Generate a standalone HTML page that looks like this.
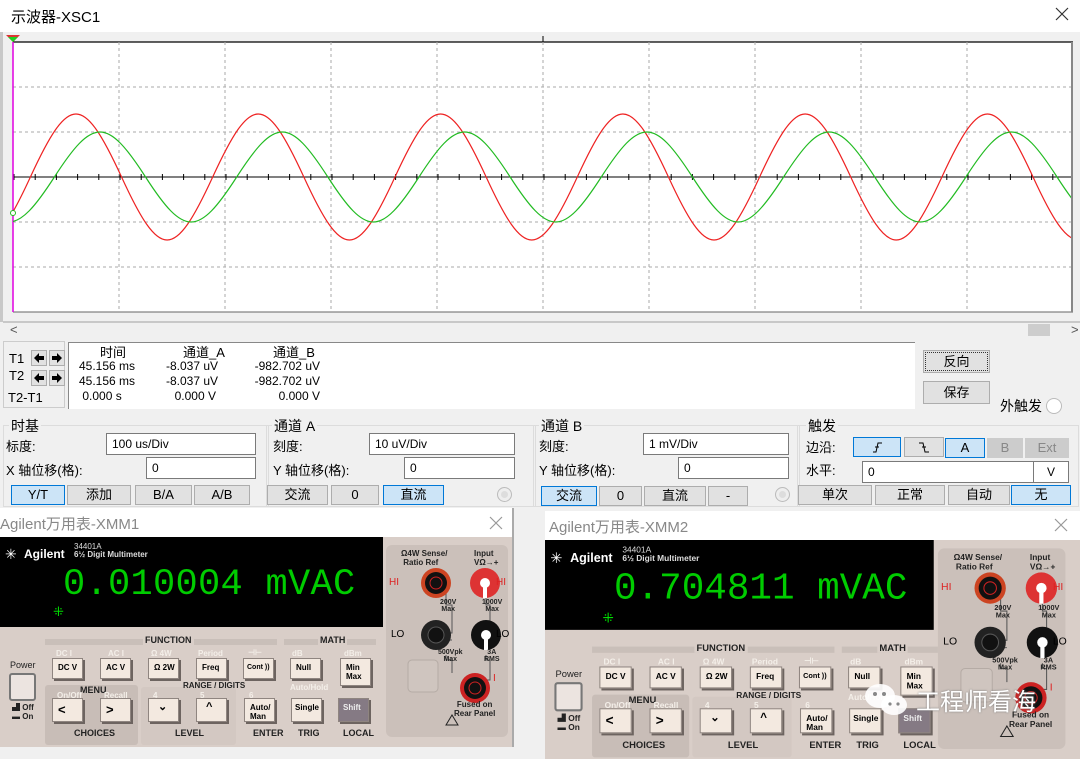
<!DOCTYPE html>
<html><head><meta charset="utf-8"><style>
*{box-sizing:border-box;margin:0;padding:0}
body{width:1080px;height:747px;overflow:hidden;background:#f0f0f0;font-family:"Liberation Sans","Noto Sans CJK SC",sans-serif;position:relative;font-size:13px;color:#000}
.a{position:absolute;white-space:nowrap}
.btn{position:absolute;background:#e1e1e1;border:1px solid #adadad;text-align:center;font-size:13px;line-height:18px;overflow:hidden}
.sel{background:#cce4f7;border-color:#0078d7}
.inp{position:absolute;background:#fff;border:1px solid #7a7a7a;font-size:12px;line-height:20px;padding-left:5px;height:22px}
.grp{position:absolute;border:1px solid #dcdcdc}
.m{position:absolute;width:512px;height:210px;background:#d9cec8;overflow:hidden}
.m .a{font-family:"Liberation Sans",sans-serif}
.k{position:absolute;width:31px;height:21px;background:#f3e9e0;border:1px solid #8f8580;box-shadow:2px 2px 0 #6d6460;font-size:8px;font-weight:bold;line-height:9px;padding:4px 0 0 5px;white-space:nowrap;overflow:hidden}
.lb{position:absolute;font-size:8px;color:#f4efe9;font-weight:bold;white-space:nowrap}
.dk{position:absolute;font-size:9px;font-weight:bold;color:#222;white-space:nowrap}
.ar{position:absolute;width:16px;height:16px;background:#e1e1e1;border:1px solid #adadad}
</style></head><body>

<div class="a" style="left:0;top:0;width:1080px;height:32px;background:#fff"></div>
<div class="a" style="left:11px;top:6px;font-size:15px">示波器-XSC1</div>
<svg class="a" style="left:1055px;top:7px" width="14" height="14"><path d="M1 1L13 13M13 1L1 13" stroke="#333" stroke-width="1.2"/></svg>
<div class="a" style="left:0;top:32px;width:3px;height:290px;background:#c8c8c8"></div>

<svg class="a" style="left:0;top:32px" width="1080" height="290">
<rect x="3" y="0" width="1077" height="290" fill="#f0f0f0"/>
<rect x="13" y="10" width="1060" height="270" fill="#fff"/>
<line x1="13" y1="10" x2="1073" y2="10" stroke="#000" stroke-width="1.2"/>
<g stroke="#aaa" stroke-dasharray="3,3" stroke-width="1">
<line x1="119" y1="10" x2="119" y2="280"/><line x1="225" y1="10" x2="225" y2="280"/><line x1="331" y1="10" x2="331" y2="280"/><line x1="437" y1="10" x2="437" y2="280"/><line x1="543" y1="10" x2="543" y2="280"/><line x1="649" y1="10" x2="649" y2="280"/><line x1="755" y1="10" x2="755" y2="280"/><line x1="861" y1="10" x2="861" y2="280"/><line x1="967" y1="10" x2="967" y2="280"/>
<line x1="13" y1="55" x2="1073" y2="55"/><line x1="13" y1="100" x2="1073" y2="100"/><line x1="13" y1="190" x2="1073" y2="190"/><line x1="13" y1="235" x2="1073" y2="235"/>
</g>
<line x1="13" y1="280" x2="1073" y2="280" stroke="#666"/>
<line x1="13" y1="145" x2="1073" y2="145" stroke="#000"/>
<line x1="13.5" y1="145" x2="1073" y2="145" stroke="#000" stroke-width="6" stroke-dasharray="1,20.2"/>
<line x1="1072" y1="10" x2="1072" y2="280" stroke="#888" stroke-width="2"/>
<line x1="543" y1="4" x2="543" y2="10" stroke="#000"/>
<line x1="13" y1="10" x2="13" y2="280" stroke="#e000e0" stroke-width="1.5"/>
<path d="M6 3L20 3L13 10Z" fill="#d33"/><path d="M8 5L18 5L13 10Z" fill="#2c2"/>
<clipPath id="c"><rect x="13" y="42" width="1058" height="270"/></clipPath>
<g clip-path="url(#c)" fill="none" stroke-width="1.2" transform="translate(0,-32)">
<path stroke="#ee2222" d="M-60.75 177 C-22.1 261 -8.25 261 30.4 177 S82.9 93 121.55 177 S174.05 261 212.7 177 S265.2 93 303.85 177 S356.35 261 395 177 S447.5 93 486.15 177 S538.65 261 577.3 177 S629.8 93 668.45 177 S720.95 261 759.6 177 S812.1 93 850.75 177 S903.25 261 941.9 177 S994.4 93 1033.05 177 S1085.55 261 1124.2 177"/>
<path stroke="#22bb22" d="M-36.75 177 C1.9 237 15.75 237 54.4 177 S106.9 117 145.55 177 S198.05 237 236.7 177 S289.2 117 327.85 177 S380.35 237 419 177 S471.5 117 510.15 177 S562.65 237 601.3 177 S653.8 117 692.45 177 S744.95 237 783.6 177 S836.1 117 874.75 177 S927.25 237 965.9 177 S1018.4 117 1057.05 177 S1109.55 237 1148.2 177"/>
</g>
<circle cx="13" cy="181" r="2.5" fill="#fff" stroke="#22bb22"/>
</svg>

<div class="a" style="left:3px;top:321px;width:1077px;height:2px;background:#c8c8c8"></div>
<div class="a" style="left:10px;top:322px;font-size:13px;color:#555">&lt;</div>
<div class="a" style="left:1028px;top:324px;width:22px;height:12px;background:#cdcdcd"></div>
<div class="a" style="left:1071px;top:322px;font-size:13px;color:#555">&gt;</div>

<div class="a" style="left:3px;top:341px;width:62px;height:67px;border:1px solid #ccc"></div>
<div class="a" style="left:9px;top:351px">T1</div>
<div class="a" style="left:9px;top:368px">T2</div>
<div class="a" style="left:8px;top:390px">T2-T1</div>
<div class="ar" style="left:31px;top:350px"><svg width="14" height="14"><path d="M2 7L7 2V5H12V9H7V12Z" fill="#000"/></svg></div>
<div class="ar" style="left:49px;top:350px"><svg width="14" height="14"><path d="M12 7L7 2V5H2V9H7V12Z" fill="#000"/></svg></div>
<div class="ar" style="left:31px;top:370px"><svg width="14" height="14"><path d="M2 7L7 2V5H12V9H7V12Z" fill="#000"/></svg></div>
<div class="ar" style="left:49px;top:370px"><svg width="14" height="14"><path d="M12 7L7 2V5H2V9H7V12Z" fill="#000"/></svg></div>
<div class="a" style="left:68px;top:342px;width:847px;height:67px;background:#fff;border-top:1px solid #888;border-left:1px solid #888"></div>
<div class="a" style="left:100px;top:342px;font-size:13px">时间</div>
<div class="a" style="left:183px;top:342px;font-size:13px">通道_A</div>
<div class="a" style="left:273px;top:342px;font-size:13px">通道_B</div>
<div class="a" style="left:79px;top:359px;font-size:12px;line-height:15px">45.156 ms<br>45.156 ms<br>&nbsp;0.000 s</div>
<div class="a" style="left:166px;top:359px;font-size:12px;line-height:15px;text-align:right;width:50px">-8.037 uV<br>-8.037 uV<br>0.000 V</div>
<div class="a" style="left:246px;top:359px;font-size:12px;line-height:15px;text-align:right;width:74px">-982.702 uV<br>-982.702 uV<br>0.000 V</div>
<div class="btn" style="left:923px;top:350px;width:67px;height:23px;line-height:21px;outline:1px dotted #333;outline-offset:-3px">反向</div>
<div class="btn" style="left:923px;top:381px;width:67px;height:23px;line-height:21px">保存</div>
<div class="a" style="left:1000px;top:396px;font-size:14px">外触发</div>
<div class="a" style="left:1046px;top:398px;width:16px;height:16px;border-radius:50%;background:#fff;border:1px solid #bbb"></div>

<div class="grp" style="left:3px;top:425px;width:266px;height:82px"></div>
<div class="a" style="left:9px;top:416px;font-size:14px;background:#f0f0f0;padding:0 2px">时基</div>
<div class="a" style="left:6px;top:436px;font-size:13px">标度:</div>
<div class="inp" style="left:106px;top:433px;width:150px">100 us/Div</div>
<div class="a" style="left:6px;top:460px;font-size:13px">X 轴位移(格):</div>
<div class="inp" style="left:146px;top:457px;width:110px">0</div>
<div class="btn sel" style="left:11px;top:485px;width:54px;height:20px">Y/T</div>
<div class="btn" style="left:67px;top:485px;width:64px;height:20px">添加</div>
<div class="btn" style="left:135px;top:485px;width:57px;height:20px">B/A</div>
<div class="btn" style="left:194px;top:485px;width:56px;height:20px">A/B</div>

<div class="grp" style="left:266px;top:425px;width:270px;height:82px"></div>
<div class="a" style="left:272px;top:416px;font-size:14px;background:#f0f0f0;padding:0 2px">通道 A</div>
<div class="a" style="left:273px;top:436px;font-size:13px">刻度:</div>
<div class="inp" style="left:369px;top:433px;width:146px">10 uV/Div</div>
<div class="a" style="left:273px;top:460px;font-size:13px">Y 轴位移(格):</div>
<div class="inp" style="left:404px;top:457px;width:111px">0</div>
<div class="btn" style="left:267px;top:485px;width:61px;height:20px">交流</div>
<div class="btn" style="left:331px;top:485px;width:48px;height:20px">0</div>
<div class="btn sel" style="left:383px;top:485px;width:61px;height:20px">直流</div>
<div class="a" style="left:497px;top:487px;width:15px;height:15px;border-radius:50%;background:#ddd;border:1px solid #bbb;box-shadow:inset 0 0 0 3px #eee"></div>

<div class="grp" style="left:533px;top:425px;width:267px;height:82px"></div>
<div class="a" style="left:539px;top:416px;font-size:14px;background:#f0f0f0;padding:0 2px">通道 B</div>
<div class="a" style="left:539px;top:436px;font-size:13px">刻度:</div>
<div class="inp" style="left:643px;top:433px;width:146px">1 mV/Div</div>
<div class="a" style="left:539px;top:460px;font-size:13px">Y 轴位移(格):</div>
<div class="inp" style="left:678px;top:457px;width:111px">0</div>
<div class="btn sel" style="left:541px;top:486px;width:56px;height:20px">交流</div>
<div class="btn" style="left:599px;top:486px;width:43px;height:20px">0</div>
<div class="btn" style="left:644px;top:486px;width:62px;height:20px">直流</div>
<div class="btn" style="left:708px;top:486px;width:40px;height:20px">-</div>
<div class="a" style="left:775px;top:487px;width:15px;height:15px;border-radius:50%;background:#ddd;border:1px solid #bbb;box-shadow:inset 0 0 0 3px #eee"></div>

<div class="grp" style="left:797px;top:425px;width:282px;height:82px"></div>
<div class="a" style="left:806px;top:416px;font-size:14px;background:#f0f0f0;padding:0 2px">触发</div>
<div class="a" style="left:806px;top:437px;font-size:13px">边沿:</div>
<div class="a" style="left:806px;top:460px;font-size:13px">水平:</div>
<div class="btn sel" style="left:853px;top:437px;width:48px;height:20px"><svg width="14" height="14" style="margin-top:2px"><path d="M3 12H6L8 3H12M5 7H9" stroke="#000" fill="none"/></svg></div>
<div class="btn" style="left:904px;top:437px;width:40px;height:20px"><svg width="14" height="14" style="margin-top:2px"><path d="M2 3H6L8 12H12M5 7H9" stroke="#000" fill="none"/></svg></div>
<div class="btn sel" style="left:945px;top:438px;width:40px;height:20px">A</div>
<div class="btn" style="left:987px;top:438px;width:36px;height:20px;background:#ccc;border-color:#ccc;color:#888">B</div>
<div class="btn" style="left:1025px;top:438px;width:44px;height:20px;background:#ccc;border-color:#ccc;color:#888">Ext</div>
<div class="inp" style="left:862px;top:461px;width:172px">0</div>
<div class="inp" style="left:1033px;top:461px;width:36px;text-align:center;padding:0">V</div>
<div class="btn" style="left:798px;top:485px;width:74px;height:20px">单次</div>
<div class="btn" style="left:875px;top:485px;width:70px;height:20px">正常</div>
<div class="btn" style="left:948px;top:485px;width:62px;height:20px">自动</div>
<div class="btn sel" style="left:1011px;top:485px;width:60px;height:20px">无</div>

<!-- XMM1 -->
<div class="a" style="left:0;top:508px;width:514px;height:239px;background:#fff;border-right:2px solid #aaa"></div>
<div class="a" style="left:0;top:513px;font-size:15px;color:#888">Agilent万用表-XMM1</div>
<svg class="a" style="left:489px;top:516px" width="14" height="14"><path d="M1 1L13 13M13 1L1 13" stroke="#999" stroke-width="1.2"/></svg>
<div class="m" style="left:0;top:537px">
<div class="a" style="left:0;top:0;width:383px;height:90px;background:#000"></div>
<div class="a" style="left:5px;top:9px;color:#fff;font-size:14px;line-height:16px">✳</div>
<div class="a" style="left:24px;top:10px;color:#fff;font-size:12px;font-weight:bold">Agilent</div>
<div class="a" style="left:74px;top:6px;color:#ddd;font-size:8px;line-height:8px">34401A<br><b>6½ Digit Multimeter</b></div>
<div class="a" style="left:63px;top:28px;color:#0c0;font-family:'Liberation Mono',monospace;font-size:37px;line-height:40px;letter-spacing:0.3px">0.010004 mVAC</div>
<div class="a" style="left:53px;top:67px;color:#0d0;font-size:13px">⁜</div>
<div class="a" style="left:45px;top:102px;width:232px;height:6px;background:#c9bfb9"></div>
<div class="dk" style="left:143px;top:98px;background:#d9cec8;padding:0 2px">FUNCTION</div>
<div class="a" style="left:284px;top:102px;width:92px;height:6px;background:#c9bfb9"></div>
<div class="dk" style="left:318px;top:98px;background:#d9cec8;padding:0 2px">MATH</div>
<div class="lb" style="left:56px;top:112px">DC I</div><div class="lb" style="left:108px;top:112px">AC I</div><div class="lb" style="left:151px;top:112px">Ω 4W</div><div class="lb" style="left:198px;top:112px">Period</div><div class="lb" style="left:248px;top:111px">⊣⊢</div><div class="lb" style="left:292px;top:112px">dB</div><div class="lb" style="left:344px;top:112px">dBm</div>
<div class="dk" style="left:10px;top:123px;font-weight:normal">Power</div>
<div class="a" style="left:9px;top:136px;width:27px;height:28px;background:#ece4e0;border:2px solid #777;border-radius:3px"></div>
<div class="dk" style="left:12px;top:166px;font-size:8px;line-height:9px">▟ Off<br>▬ On</div>
<div class="k" style="left:52px;top:121px">DC V</div>
<div class="k" style="left:100px;top:121px">AC V</div>
<div class="k" style="left:148px;top:121px">Ω 2W</div>
<div class="k" style="left:196px;top:121px">Freq</div>
<div class="k" style="left:243px;top:121px;padding-left:3px;font-size:7px">Cont ))</div>
<div class="k" style="left:290px;top:121px">Null</div>
<div class="k" style="left:340px;top:121px;height:28px">Min<br>Max</div>
<div class="a" style="left:45px;top:148px;width:93px;height:60px;background:#c8bdb7;border-radius:3px"></div>
<div class="a" style="left:141px;top:150px;width:95px;height:58px;background:#d3c8c2;border-radius:3px"></div>
<div class="dk" style="left:80px;top:148px">MENU</div>
<div class="lb" style="left:57px;top:154px">On/Off</div><div class="lb" style="left:104px;top:154px">Recall</div>
<div class="dk" style="left:183px;top:144px;font-size:8px">RANGE / DIGITS</div>
<div class="lb" style="left:153px;top:154px">4</div><div class="lb" style="left:200px;top:154px">5</div><div class="lb" style="left:249px;top:154px">6</div>
<div class="lb" style="left:290px;top:146px">Auto/Hold</div>
<div class="k" style="left:52px;top:161px;height:24px;font-size:13px;line-height:14px">&lt;</div>
<div class="k" style="left:100px;top:161px;height:24px;font-size:13px;line-height:14px">&gt;</div>
<div class="k" style="left:148px;top:161px;height:24px;font-size:11px;padding-left:9px">⌄</div>
<div class="k" style="left:196px;top:161px;height:24px;font-size:11px;padding-left:9px">^</div>
<div class="k" style="left:244px;top:161px;height:24px">Auto/<br>Man</div>
<div class="k" style="left:291px;top:161px;height:24px;padding-left:3px">Single</div>
<div class="k" style="left:338px;top:161px;height:24px;background:#857a84;color:#eee;padding-left:4px">Shift</div>
<div class="dk" style="left:74px;top:191px">CHOICES</div><div class="dk" style="left:175px;top:191px">LEVEL</div><div class="dk" style="left:253px;top:191px">ENTER</div><div class="dk" style="left:298px;top:191px">TRIG</div><div class="dk" style="left:343px;top:191px">LOCAL</div>
<div class="a" style="left:386px;top:8px;width:122px;height:192px;background:#cbc0ba;border-radius:6px"></div>
<svg class="a" style="left:386px;top:8px" width="122" height="192">
<path d="M60 48 V60 H66 V88 H58 V95 H66 M100 48 V60 H104 V88 H96 M60 110 V115 H66 V128 M100 110 V115 H104 V135 H96" stroke="#555" fill="none"/>
<circle cx="50" cy="38" r="15" fill="#c42"/><circle cx="50" cy="38" r="11" fill="#111"/><circle cx="50" cy="38" r="6" fill="none" stroke="#c22"/>
<circle cx="99" cy="38" r="15" fill="#d33"/><circle cx="99" cy="38" r="5" fill="#fff"/><rect x="97" y="38" width="4" height="15" fill="#fff"/>
<circle cx="50" cy="90" r="15" fill="#222"/><circle cx="50" cy="90" r="8" fill="#111" stroke="#555"/>
<circle cx="100" cy="90" r="15" fill="#111"/><circle cx="100" cy="90" r="5" fill="#fff"/><rect x="98" y="90" width="4" height="15" fill="#fff"/>
<circle cx="89" cy="143" r="15" fill="#c22"/><circle cx="89" cy="143" r="11" fill="#111"/><circle cx="89" cy="143" r="6" fill="none" stroke="#c22"/>
<rect x="22" y="115" width="30" height="32" rx="4" fill="#cfc5bf" stroke="#b5aba5"/>
<path d="M60 180 L66 170 L72 180Z" fill="none" stroke="#222"/>
</svg>
<div class="dk" style="left:401px;top:12px;font-size:8px">Ω4W Sense/<br>&nbsp;Ratio Ref</div>
<div class="dk" style="left:474px;top:12px;font-size:8px">Input<br>VΩ→+</div>
<div class="a" style="left:389px;top:40px;color:#d22;font-size:10px">HI</div>
<div class="a" style="left:496px;top:40px;color:#d22;font-size:10px">HI</div>
<div class="a" style="left:391px;top:92px;font-size:10px">LO</div>
<div class="a" style="left:496px;top:92px;font-size:10px">LO</div>
<div class="dk" style="left:440px;top:62px;font-size:7px;text-align:center">200V<br>Max</div>
<div class="dk" style="left:482px;top:62px;font-size:7px;text-align:center">1000V<br>Max</div>
<div class="dk" style="left:438px;top:112px;font-size:7px;text-align:center">500Vpk<br>Max</div>
<div class="dk" style="left:484px;top:112px;font-size:7px;text-align:center">3A<br>RMS</div>
<div class="a" style="left:493px;top:136px;color:#d22;font-size:10px">I</div>
<div class="dk" style="left:454px;top:163px;font-size:8px;text-align:center">Fused on<br>Rear Panel</div>
</div>

<!-- XMM2 -->
<div class="a" style="left:545px;top:511px;width:535px;height:236px;background:#fff"></div>
<div class="a" style="left:549px;top:516px;font-size:15px;color:#888">Agilent万用表-XMM2</div>
<svg class="a" style="left:1054px;top:518px" width="14" height="14"><path d="M1 1L13 13M13 1L1 13" stroke="#999" stroke-width="1.2"/></svg>
<div class="m" style="left:545px;top:540px;transform:scale(1.045);transform-origin:0 0">
<div class="a" style="left:0;top:0;width:372px;height:86px;background:#000"></div>
<div class="a" style="left:5px;top:9px;color:#fff;font-size:14px;line-height:16px">✳</div>
<div class="a" style="left:24px;top:10px;color:#fff;font-size:12px;font-weight:bold">Agilent</div>
<div class="a" style="left:74px;top:6px;color:#ddd;font-size:8px;line-height:8px">34401A<br><b>6½ Digit Multimeter</b></div>
<div class="a" style="left:66px;top:27px;color:#0c0;font-family:'Liberation Mono',monospace;font-size:36px;line-height:40px;letter-spacing:0px">0.704811 mVAC</div>
<div class="a" style="left:55px;top:67px;color:#0d0;font-size:13px">⁜</div>
<div class="a" style="left:45px;top:102px;width:232px;height:6px;background:#c9bfb9"></div>
<div class="dk" style="left:143px;top:98px;background:#d9cec8;padding:0 2px">FUNCTION</div>
<div class="a" style="left:284px;top:102px;width:92px;height:6px;background:#c9bfb9"></div>
<div class="dk" style="left:318px;top:98px;background:#d9cec8;padding:0 2px">MATH</div>
<div class="lb" style="left:56px;top:112px">DC I</div><div class="lb" style="left:108px;top:112px">AC I</div><div class="lb" style="left:151px;top:112px">Ω 4W</div><div class="lb" style="left:198px;top:112px">Period</div><div class="lb" style="left:248px;top:111px">⊣⊢</div><div class="lb" style="left:292px;top:112px">dB</div><div class="lb" style="left:344px;top:112px">dBm</div>
<div class="dk" style="left:10px;top:123px;font-weight:normal">Power</div>
<div class="a" style="left:9px;top:136px;width:27px;height:28px;background:#ece4e0;border:2px solid #777;border-radius:3px"></div>
<div class="dk" style="left:12px;top:166px;font-size:8px;line-height:9px">▟ Off<br>▬ On</div>
<div class="k" style="left:52px;top:121px">DC V</div>
<div class="k" style="left:100px;top:121px">AC V</div>
<div class="k" style="left:148px;top:121px">Ω 2W</div>
<div class="k" style="left:196px;top:121px">Freq</div>
<div class="k" style="left:243px;top:121px;padding-left:3px;font-size:7px">Cont ))</div>
<div class="k" style="left:290px;top:121px">Null</div>
<div class="k" style="left:340px;top:121px;height:28px">Min<br>Max</div>
<div class="a" style="left:45px;top:148px;width:93px;height:60px;background:#c8bdb7;border-radius:3px"></div>
<div class="a" style="left:141px;top:150px;width:95px;height:58px;background:#d3c8c2;border-radius:3px"></div>
<div class="dk" style="left:80px;top:148px">MENU</div>
<div class="lb" style="left:57px;top:154px">On/Off</div><div class="lb" style="left:104px;top:154px">Recall</div>
<div class="dk" style="left:183px;top:144px;font-size:8px">RANGE / DIGITS</div>
<div class="lb" style="left:153px;top:154px">4</div><div class="lb" style="left:200px;top:154px">5</div><div class="lb" style="left:249px;top:154px">6</div>
<div class="lb" style="left:290px;top:146px">Auto/Hold</div>
<div class="k" style="left:52px;top:161px;height:24px;font-size:13px;line-height:14px">&lt;</div>
<div class="k" style="left:100px;top:161px;height:24px;font-size:13px;line-height:14px">&gt;</div>
<div class="k" style="left:148px;top:161px;height:24px;font-size:11px;padding-left:9px">⌄</div>
<div class="k" style="left:196px;top:161px;height:24px;font-size:11px;padding-left:9px">^</div>
<div class="k" style="left:244px;top:161px;height:24px">Auto/<br>Man</div>
<div class="k" style="left:291px;top:161px;height:24px;padding-left:3px">Single</div>
<div class="k" style="left:338px;top:161px;height:24px;background:#857a84;color:#eee;padding-left:4px">Shift</div>
<div class="dk" style="left:74px;top:191px">CHOICES</div><div class="dk" style="left:175px;top:191px">LEVEL</div><div class="dk" style="left:253px;top:191px">ENTER</div><div class="dk" style="left:298px;top:191px">TRIG</div><div class="dk" style="left:343px;top:191px">LOCAL</div>
<div class="a" style="left:376px;top:8px;width:122px;height:192px;background:#cbc0ba;border-radius:6px"></div>
<svg class="a" style="left:376px;top:8px" width="122" height="192">
<path d="M60 48 V60 H66 V88 H58 V95 H66 M100 48 V60 H104 V88 H96 M60 110 V115 H66 V128 M100 110 V115 H104 V135 H96" stroke="#555" fill="none"/>
<circle cx="50" cy="38" r="15" fill="#c42"/><circle cx="50" cy="38" r="11" fill="#111"/><circle cx="50" cy="38" r="6" fill="none" stroke="#c22"/>
<circle cx="99" cy="38" r="15" fill="#d33"/><circle cx="99" cy="38" r="5" fill="#fff"/><rect x="97" y="38" width="4" height="15" fill="#fff"/>
<circle cx="50" cy="90" r="15" fill="#222"/><circle cx="50" cy="90" r="8" fill="#111" stroke="#555"/>
<circle cx="100" cy="90" r="15" fill="#111"/><circle cx="100" cy="90" r="5" fill="#fff"/><rect x="98" y="90" width="4" height="15" fill="#fff"/>
<circle cx="89" cy="143" r="15" fill="#c22"/><circle cx="89" cy="143" r="11" fill="#111"/><circle cx="89" cy="143" r="6" fill="none" stroke="#c22"/>
<rect x="22" y="115" width="30" height="32" rx="4" fill="#cfc5bf" stroke="#b5aba5"/>
<path d="M60 180 L66 170 L72 180Z" fill="none" stroke="#222"/>
</svg>
<div class="dk" style="left:391px;top:12px;font-size:8px">Ω4W Sense/<br>&nbsp;Ratio Ref</div>
<div class="dk" style="left:464px;top:12px;font-size:8px">Input<br>VΩ→+</div>
<div class="a" style="left:379px;top:40px;color:#d22;font-size:10px">HI</div>
<div class="a" style="left:486px;top:40px;color:#d22;font-size:10px">HI</div>
<div class="a" style="left:381px;top:92px;font-size:10px">LO</div>
<div class="a" style="left:486px;top:92px;font-size:10px">LO</div>
<div class="dk" style="left:430px;top:62px;font-size:7px;text-align:center">200V<br>Max</div>
<div class="dk" style="left:472px;top:62px;font-size:7px;text-align:center">1000V<br>Max</div>
<div class="dk" style="left:428px;top:112px;font-size:7px;text-align:center">500Vpk<br>Max</div>
<div class="dk" style="left:474px;top:112px;font-size:7px;text-align:center">3A<br>RMS</div>
<div class="a" style="left:483px;top:136px;color:#d22;font-size:10px">I</div>
<div class="dk" style="left:444px;top:163px;font-size:8px;text-align:center">Fused on<br>Rear Panel</div>
</div>
<svg class="a" style="left:862px;top:680px" width="50" height="40"><ellipse cx="18" cy="16" rx="15" ry="12" fill="#fff" opacity="0.9"/><ellipse cx="32" cy="25" rx="13" ry="10" fill="#fff" opacity="0.9"/><circle cx="13" cy="14" r="2" fill="#888"/><circle cx="22" cy="14" r="2" fill="#888"/><circle cx="28" cy="24" r="1.6" fill="#888"/><circle cx="36" cy="24" r="1.6" fill="#888"/></svg>
<div class="a" style="left:916px;top:682px;font-size:24px;color:#fff;text-shadow:0 0 2px #777">工程师看海</div>
</body></html>
